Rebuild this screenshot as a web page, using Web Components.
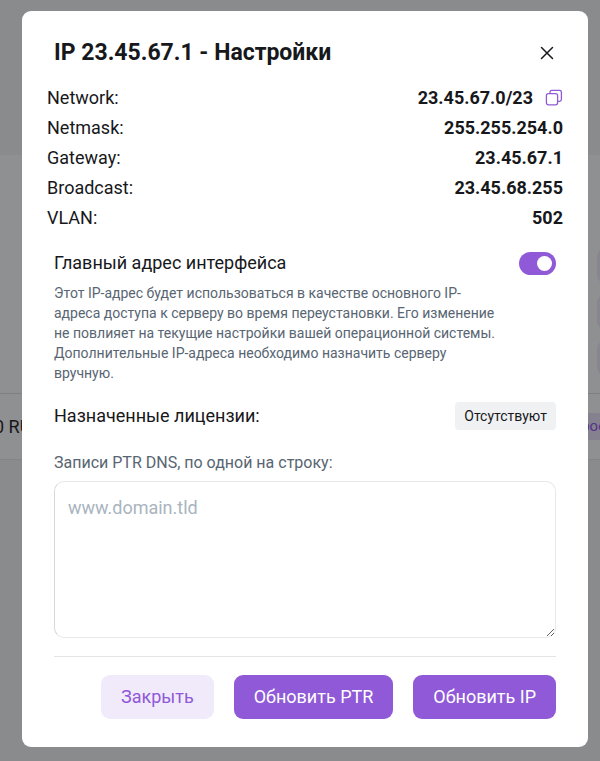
<!DOCTYPE html>
<html lang="ru">
<head>
<meta charset="utf-8">
<meta name="viewport" content="width=device-width, initial-scale=1">
<title>IP 23.45.67.1 - Настройки</title>
<style>
html, body { margin: 0; height: 100%; }
body {
  font-family: Roboto, "Noto Sans", sans-serif;
  font-size: 18px;
  color: #17181b;
  --accent: #8f59d7;
  --muted: #586572;
}
</style>
</head>
<body>
<app-shell>
  <backdrop-page slot="page"></backdrop-page>
  <modal-card heading="IP 23.45.67.1 - Настройки">
    <info-list>
      <info-row label="Network:">23.45.67.0/23<copy-button slot="action"></copy-button></info-row>
      <info-row label="Netmask:">255.255.254.0</info-row>
      <info-row label="Gateway:">23.45.67.1</info-row>
      <info-row label="Broadcast:">23.45.68.255</info-row>
      <info-row label="VLAN:">502</info-row>
    </info-list>
    <toggle-field label="Главный адрес интерфейса">Этот IP-адрес будет использоваться в качестве основного IP-адреса доступа к серверу во время переустановки. Его изменение не повлияет на текущие настройки вашей операционной системы. Дополнительные IP-адреса необходимо назначить серверу вручную.</toggle-field>
    <license-row label="Назначенные лицензии:">Отсутствуют</license-row>
    <ptr-field label="Записи PTR DNS, по одной на строку:" placeholder="www.domain.tld"></ptr-field>
    <action-button slot="actions" variant="light">Закрыть</action-button>
    <action-button slot="actions">Обновить PTR</action-button>
    <action-button slot="actions">Обновить IP</action-button>
  </modal-card>
</app-shell>
<script>
function define(name, render) {
  customElements.define(name, class extends HTMLElement {
    constructor() {
      super();
      this.attachShadow({ mode: "open" });
    }
    connectedCallback() {
      this.shadowRoot.innerHTML = render(this);
    }
  });
}

define("app-shell", () => `
  <style>
    :host { display: grid; min-height: 100%; overflow: hidden; }
    .page, .overlay { grid-area: 1 / 1; min-width: 0; display: grid; }
    .overlay { z-index: 1; padding: 11px 12px 14px 22px; align-items: start; }
  </style>
  <div class="page"><slot name="page"></slot></div>
  <div class="overlay"><slot></slot></div>`);

define("backdrop-page", () => `
  <style>
    :host { display: flex; flex-direction: column; background: #8a8b8d; overflow: hidden; }
    .head { height: 155px; }
    .tools { height: 238px; box-sizing: border-box; padding-top: 94px; background: #8f9092;
      display: flex; flex-direction: column; align-items: flex-end; gap: 12px; }
    .tool { width: 34px; height: 34px; margin-right: -31px; border-radius: 8px; background: #88858f; }
    .row { height: 67px; box-sizing: border-box; background: #8f9092; display: flex; align-items: center;
      justify-content: space-between; border-top: 1px solid #7f8083; border-bottom: 1px solid #848588; }
    .price { margin-left: -6px; }
    .tag { margin-right: -8px; padding: 0 2px; line-height: 27px; font-size: 15px; background: #86818f; color: #55338a; }
  </style>
  <div class="head"></div>
  <div class="tools"><div class="tool"></div><div class="tool"></div><div class="tool"></div></div>
  <div class="row"><span class="price">0 RU</span><span class="tag">рос</span></div>`);

define("modal-card", el => `
  <style>
    :host { display: block; min-width: 0; background: #fff; border-radius: 9px; padding: 24px 32px 28px; }
    header { display: flex; justify-content: space-between; align-items: center; }
    h1 { margin: 0; font-size: 23px; line-height: 35px; font-weight: 700; }
    button { border: 0; padding: 0; background: none; width: 18px; height: 18px; display: grid; place-items: center; color: inherit; }
    footer { margin-top: 18px; padding-top: 18px; border-top: 1px solid #e3e4e6;
      display: flex; flex-wrap: wrap; justify-content: flex-end; gap: 20px; }
  </style>
  <header>
    <h1>${el.getAttribute("heading")}</h1>
    <button type="button" aria-label="Закрыть окно">
      <svg width="14" height="14" viewBox="0 0 14 14" fill="none" stroke="currentColor" stroke-width="1.5" stroke-linecap="round"><path d="M1.5 1.5l11 11M12.5 1.5l-11 11"/></svg>
    </button>
  </header>
  <slot></slot>
  <footer><slot name="actions"></slot></footer>`);

define("info-list", () => `
  <style>:host { display: block; margin: 13px -7px 0; }</style>
  <slot></slot>`);

define("info-row", el => `
  <style>
    :host { display: flex; justify-content: space-between; line-height: 30px; }
    .value { display: flex; align-items: center; gap: 12px; font-weight: 700; }
  </style>
  <span>${el.getAttribute("label")}</span>
  <span class="value"><span><slot></slot></span><slot name="action"></slot></span>`);

define("copy-button", () => `
  <style>
    :host { display: grid; }
    button { border: 0; padding: 0; background: none; color: var(--accent); display: grid; }
  </style>
  <button type="button" aria-label="Скопировать">
    <svg width="18" height="18" viewBox="0 0 18 18" fill="none" stroke="currentColor" stroke-width="1.3" stroke-linejoin="round">
      <rect x="1.4" y="4.6" width="11.2" height="11.2" rx="2"/>
      <path d="M5 4.4V3.2a1.8 1.8 0 0 1 1.8-1.8h7.8a1.8 1.8 0 0 1 1.8 1.8v7.4a1.8 1.8 0 0 1-1.8 1.8h-1.8"/>
    </svg>
  </button>`);

define("toggle-field", el => `
  <style>
    :host { display: block; margin-top: 16px; }
    .top { display: flex; justify-content: space-between; align-items: center; line-height: 28px; }
    input { appearance: none; margin: 0; width: 37px; height: 23px; box-sizing: border-box; padding: 4px;
      border-radius: 12px; background: #c9ccd1; display: flex; align-items: center; }
    input::before { content: ""; width: 15px; height: 15px; border-radius: 50%; background: #fff; }
    input:checked { background: var(--accent); justify-content: flex-end; }
    p { margin: 6px 56px 0 0; font-size: 14px; line-height: 20px; color: var(--muted); }
  </style>
  <div class="top"><label for="main">${el.getAttribute("label")}</label><input id="main" type="checkbox" role="switch" checked></div>
  <p><slot></slot></p>`);

define("license-row", el => `
  <style>
    :host { display: flex; justify-content: space-between; align-items: center; margin-top: 19px; line-height: 28px; }
    .badge { padding: 0 9px; border-radius: 4px; background: #f0f1f3; font-size: 14px; }
  </style>
  <span>${el.getAttribute("label")}</span><span class="badge"><slot></slot></span>`);

define("ptr-field", el => `
  <style>
    :host { display: block; margin-top: 21px; }
    label { display: block; font-size: 16px; line-height: 24px; color: var(--muted); }
    textarea { display: block; box-sizing: border-box; width: 100%; height: 157px; margin-top: 6px; padding: 12px 13px;
      border: 1px solid #e6e8ea; border-left-color: #d3d9de; border-radius: 10px; background: #fff; font: inherit; line-height: 28px; color: inherit; resize: vertical; }
    textarea::placeholder { color: #a9b4be; opacity: 1; }
  </style>
  <label for="ptr">${el.getAttribute("label")}</label>
  <textarea id="ptr" placeholder="${el.getAttribute("placeholder")}"></textarea>`);

define("action-button", el => `
  <style>
    :host { display: block; }
    button { border: 0; border-radius: 9px; padding: 0 20px; font: inherit; line-height: 44px; background: var(--accent); color: #fff; display: block; }
    button.light { background: #f1eafa; color: var(--accent); }
  </style>
  <button type="button" class="${el.getAttribute("variant") || "solid"}"><slot></slot></button>`);
</script>
</body>
</html>
